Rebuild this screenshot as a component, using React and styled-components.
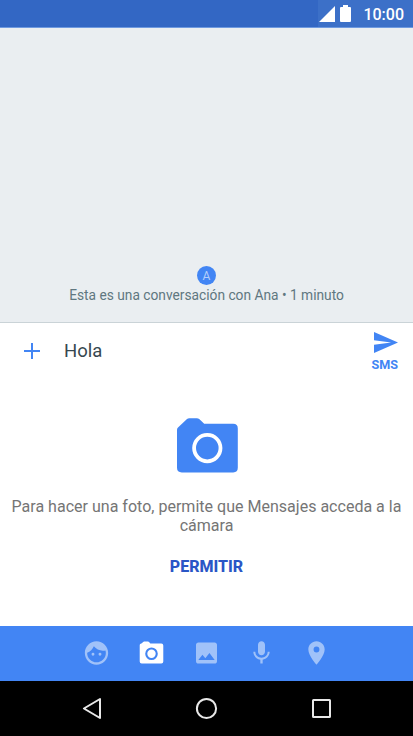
import styled, { createGlobalStyle } from 'styled-components';

const TABS = [
  {
    id: 'stickers',
    path: 'M10.25 13a1.25 1.25 0 1 1-2.5 0 1.25 1.25 0 0 1 2.5 0zM15 11.75a1.25 1.25 0 1 0 0 2.5 1.25 1.25 0 0 0 0-2.5zM22 12c0 5.52-4.48 10-10 10S2 17.52 2 12 6.48 2 12 2s10 4.48 10 10zm-2 0c0-.78-.12-1.53-.33-2.24-.7.15-1.42.24-2.17.24-3.13 0-5.92-1.44-7.76-3.69C8.69 8.87 6.6 10.88 4 11.86c.01.04 0 .09 0 .14 0 4.41 3.59 8 8 8s8-3.59 8-8z',
  },
  { id: 'camera', active: true },
  {
    id: 'gallery',
    path: 'M21 19V5c0-1.1-.9-2-2-2H5c-1.1 0-2 .9-2 2v14c0 1.1.9 2 2 2h14c1.1 0 2-.9 2-2zM8.5 13.5l2.5 3.01L14.5 12l4.5 6H5l3.5-4.5z',
  },
  {
    id: 'audio',
    path: 'M12 14c1.66 0 2.99-1.34 2.99-3L15 5c0-1.66-1.34-3-3-3S9 3.34 9 5v6c0 1.66 1.34 3 3 3zm5.3-3c0 3-2.54 5.1-5.3 5.1S6.7 14 6.7 11H5c0 3.41 2.72 6.23 6 6.72V21h2v-3.28c3.28-.48 6-3.3 6-6.72h-1.7z',
  },
  {
    id: 'location',
    path: 'M12 2C8.13 2 5 5.13 5 9c0 5.25 7 13 7 13s7-7.75 7-13c0-3.87-3.13-7-7-7zm0 9.5a2.5 2.5 0 0 1 0-5 2.5 2.5 0 0 1 0 5z',
  },
];

function App() {
  return (
    <>
      <GlobalStyle />
      <Screen>
        <StatusBar>
          <svg width="16" height="16" viewBox="0 0 16 16" fill="#fff">
            <path d="M16 0v16H0z" />
          </svg>
          <svg width="11" height="17" viewBox="0 0 11 17" fill="#fff">
            <path d="M3 0h5v2h2q1 0 1 1v13q0 1-1 1H1q-1 0-1-1V3q0-1 1-1h2z" />
          </svg>
          <Clock>10:00</Clock>
        </StatusBar>

        <Conversation>
          <Avatar>A</Avatar>
          <Notice>Esta es una conversación con Ana • 1 minuto</Notice>
        </Conversation>

        <Compose>
          <AddButton aria-label="Añadir">
            <svg width="16" height="16" viewBox="0 0 16 16" fill="#4285f4">
              <path d="M7 0h2v7h7v2H9v7H7V9H0V7h7z" />
            </svg>
          </AddButton>
          <Message>Hola</Message>
          <SendButton>
            <svg width="24" height="21" viewBox="2 3 21 18" preserveAspectRatio="none" fill="#4285f4">
              <path d="M2.01 21L23 12 2.01 3 2 10l15 2-15 2z" />
            </svg>
            <span>SMS</span>
          </SendButton>
        </Compose>

        <Permission>
          <svg width="62" height="55" viewBox="0 0 62 55">
            <path
              d="M11 1Q11.9.2 13.3.2H20.7Q22.3.2 23.5 1.3L28.2 5.8H57.2Q61.8 5.8 61.8 10.4V49.8Q61.8 54.4 57.2 54.4H5.8Q1 54.4 1 49.8V12Q1 10.6 2 9.6z"
              fill="#4285f4"
            />
            <circle cx="31.3" cy="30.1" r="13.2" fill="none" stroke="#fff" strokeWidth="3.8" />
          </svg>
          <Explanation>
            Para hacer una foto, permite que Mensajes acceda a la cámara
          </Explanation>
          <AllowButton>PERMITIR</AllowButton>
        </Permission>

        <TabBar>
          {TABS.map(({ id, active, path }) => (
            <Tab key={id} $active={active}>
              <svg width="29" height="28" viewBox="0 0 24 24" fill="currentColor">
                {path ? <path d={path} fillRule="evenodd" /> : <CameraGlyph />}
              </svg>
            </Tab>
          ))}
        </TabBar>

        <NavBar>
          <svg width="23" height="23" viewBox="0 0 23 23">
            <path d="M20 2v19L3.9 11.5z" />
          </svg>
          <svg width="23" height="23" viewBox="0 0 23 23">
            <circle cx="11.5" cy="11.5" r="9.6" />
          </svg>
          <svg width="23" height="23" viewBox="0 0 23 23">
            <rect x="3" y="3" width="17" height="17" rx="0.5" />
          </svg>
        </NavBar>
      </Screen>
    </>
  );
}

function CameraGlyph() {
  return (
    <>
      <path d="M3.7 3.6L4.8 2.5Q5.1 2.1 5.7 2.1H9Q9.5 2.1 9.9 2.5L11 3.8H20.4Q22.1 3.8 22.1 5.5V19.3Q22.1 21 20.4 21H3.6Q1.9 21 1.9 19.3V5.3Q1.9 4.3 2.7 4z" />
      <circle cx="12" cy="12.6" r="4.5" fill="none" stroke="#4285f4" strokeWidth="1.8" />
    </>
  );
}

export default App;

const GlobalStyle = createGlobalStyle`
  * {
    box-sizing: border-box;
  }

  body {
    margin: 0;
    font-family: Roboto, sans-serif;
  }

  button {
    padding: 0;
    border: 0;
    background: none;
    font-family: inherit;
  }

  svg {
    display: block;
    flex-shrink: 0;
  }
`;

const Screen = styled.div`
  display: flex;
  flex-direction: column;
  width: 413px;
  height: 736px;
  overflow: hidden;
  background: #fff;
`;

const StatusBar = styled.header`
  display: flex;
  justify-content: flex-end;
  align-items: center;
  gap: 5px;
  height: 28px;
  padding-right: 9px;
  border-bottom: 1px solid #6f9ae0;
  background: linear-gradient(to right, #3367c4 318px, #3c70c8 318px);
`;

const Clock = styled.time`
  margin: 2px 0 0 7px;
  color: #fff;
  font-size: 16px;
  font-weight: 500;
  line-height: 19px;
`;

const Conversation = styled.main`
  display: flex;
  flex-direction: column;
  align-items: center;
  justify-content: flex-end;
  height: 295px;
  padding-bottom: 18px;
  border-bottom: 1px solid #cad3d7;
  background: #eaeef1;
`;

const Avatar = styled.div`
  display: flex;
  justify-content: center;
  align-items: center;
  width: 19px;
  height: 19px;
  border-radius: 50%;
  background: #4285f4;
  color: #b4cefb;
  font-size: 12px;
`;

const Notice = styled.p`
  margin: 1px 0 0;
  color: #607780;
  font-size: 13.75px;
  line-height: 18px;
  white-space: nowrap;
`;

const Compose = styled.div`
  display: flex;
  align-items: center;
  height: 56px;
  padding: 0 15px 0 24px;
`;

const AddButton = styled.button`
  width: 16px;
`;

const Message = styled.div`
  flex: 1;
  margin-left: 24px;
  color: #37474f;
  font-size: 18.5px;
`;

const SendButton = styled.button`
  display: flex;
  flex-direction: column;
  align-items: flex-end;
  gap: 4px;
  margin-top: 2px;
  color: #4285f4;
  font-size: 12.6px;
  font-weight: 700;
  line-height: 16px;
`;

const Permission = styled.section`
  display: flex;
  flex: 1;
  flex-direction: column;
  align-items: center;
  padding-top: 39px;
`;

const Explanation = styled.p`
  margin: 24px 0 0;
  padding: 0 8px;
  color: #757575;
  font-size: 16.05px;
  line-height: 19px;
  text-align: center;
`;

const AllowButton = styled.button`
  margin-top: 22px;
  color: #2a56c6;
  font-size: 16px;
  font-weight: 800;
  line-height: 19px;
`;

const TabBar = styled.nav`
  display: flex;
  justify-content: center;
  align-items: center;
  gap: 26px;
  height: 55px;
  padding-bottom: 1px;
  background: #4285f4;
`;

const Tab = styled.button`
  color: ${({ $active }) => ($active ? '#fff' : '#a0c2f9')};
`;

const NavBar = styled.footer`
  display: flex;
  justify-content: center;
  align-items: center;
  gap: 92px;
  height: 55px;
  background: #000;

  svg {
    fill: none;
    stroke: #e8e8e8;
    stroke-width: 2;
    stroke-linejoin: round;
  }
`;
